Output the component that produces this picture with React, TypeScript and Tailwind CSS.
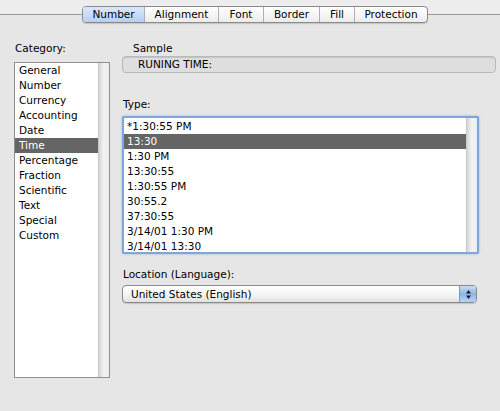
import React from 'react';

const tabs = [
  { label: 'Number', w: 'w-[61px]' },
  { label: 'Alignment', w: 'w-[74px]' },
  { label: 'Font', w: 'w-[45px]' },
  { label: 'Border', w: 'w-[56px]' },
  { label: 'Fill', w: 'w-[35px]' },
  { label: 'Protection', w: 'w-[73px]' },
];

const categories = [
  'General',
  'Number',
  'Currency',
  'Accounting',
  'Date',
  'Time',
  'Percentage',
  'Fraction',
  'Scientific',
  'Text',
  'Special',
  'Custom',
];

const types = [
  '*1:30:55 PM',
  '13:30',
  '1:30 PM',
  '13:30:55',
  '1:30:55 PM',
  '30:55.2',
  '37:30:55',
  '3/14/01 1:30 PM',
  '3/14/01 13:30',
];

function Scrollbar() {
  return (
    <div className="w-[11px] shrink-0 bg-gradient-to-r from-[#d6d6d6] via-[#f4f4f4] to-[#ececec] border-l border-[#c8c8c8]" />
  );
}

export default function App() {
  return (
    <div
      className="w-[500px] h-[411px] bg-[#e6e6e6] text-[10.5px] text-black overflow-hidden"
      style={{ fontFamily: '"Lucida Grande", "DejaVu Sans", sans-serif' }}
    >
      {/* tab strip */}
      <div className="relative h-[26px]">
        <div className="h-[15px] bg-[#ededed] border-b border-[#9a9a9a]" />
        <div className="absolute left-[82px] top-[6px] flex h-[17px] rounded-[4px] border border-[#8a8a8a] bg-gradient-to-b from-white to-[#ececec] shadow-[0_1px_1px_rgba(0,0,0,0.15)] overflow-hidden">
          {tabs.map((t, i) => (
            <div
              key={t.label}
              className={`${t.w} flex items-center justify-center leading-none ${
                i > 0 ? 'border-l border-[#b0b0b0]' : ''
              } ${i === 0 ? 'bg-gradient-to-b from-[#dbe9fa] to-[#b4d0f2]' : ''}`}
            >
              {t.label}
            </div>
          ))}
        </div>
      </div>

      <div className="flex pl-[14px] pt-[16px]">
        {/* category column */}
        <div className="w-[96px] shrink-0">
          <div className="pl-[1px] h-[20px] leading-[12px]">Category:</div>
          <div className="flex h-[316px] bg-white border border-[#8e8e8e]">
            <div className="flex-1">
              {categories.map((c) => (
                <div
                  key={c}
                  className={`h-[15px] leading-[15px] pl-[4px] ${
                    c === 'Time' ? 'bg-[#656565] text-white' : ''
                  }`}
                >
                  {c}
                </div>
              ))}
            </div>
            <Scrollbar />
          </div>
        </div>

        {/* right column */}
        <div className="ml-[12px] w-[374px] flex flex-col">
          <div className="pl-[11px] h-[14px] leading-[12px]">Sample</div>
          <div className="h-[17px] rounded-[4px] border border-[#b9b9b9] bg-[#dedede] shadow-[inset_0_1px_1px_rgba(0,0,0,0.12)] pl-[15px] leading-[15px]">
            RUNING TIME:
          </div>

          <div className="mt-[25px] pl-[1px] h-[18px] leading-[12px]">Type:</div>
          <div className="w-[357px] h-[138px] rounded-[2px] border-[2px] border-[#7fa6db] shadow-[0_0_2px_rgba(70,120,200,0.6)] bg-white flex">
            <div className="flex-1 pt-[1px]">
              {types.map((t) => (
                <div
                  key={t}
                  className={`h-[15px] leading-[15px] pl-[3px] ${
                    t === '13:30' ? 'bg-[#656565] text-white' : ''
                  }`}
                >
                  {t}
                </div>
              ))}
            </div>
            <Scrollbar />
          </div>

          <div className="mt-[13px] pl-[1px] h-[18px] leading-[14px]">Location (Language):</div>
          <div className="w-[355px] h-[18px] rounded-[4px] border border-[#8a8a8a] bg-gradient-to-b from-white via-[#f6f6f6] to-[#e2e2e2] shadow-[0_1px_1px_rgba(0,0,0,0.15)] flex overflow-hidden">
            <div className="flex-1 pl-[8px] leading-[16px]">United States (English)</div>
            <div className="w-[17px] bg-gradient-to-b from-[#c7dcf6] via-[#8fb5ea] to-[#b9d3f5] border-l border-[#7a98c4] flex items-center justify-center">
              <svg width="7" height="11" viewBox="0 0 7 11">
                <path d="M3.5 1 L6 4.5 H1 Z" fill="#1b1b1b" />
                <path d="M3.5 10 L6 6.5 H1 Z" fill="#1b1b1b" />
              </svg>
            </div>
          </div>
        </div>
      </div>
    </div>
  );
}
